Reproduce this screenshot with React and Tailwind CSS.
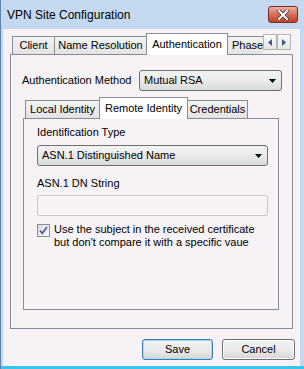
import React from 'react'

const Tab = ({ label, active, className = '' }) =>
  active ? (
    <div className={`relative z-10 -mb-px h-[22px] flex items-center justify-center whitespace-nowrap bg-white border border-b-0 border-[#898c95] ${className}`}>
      {label}
    </div>
  ) : (
    <div className={`h-[18px] flex items-center justify-center whitespace-nowrap bg-gradient-to-b from-[#f3f3f3] to-[#e3e3e3] border border-b-0 border-[#898c95] ${className}`}>
      {label}
    </div>
  )

const Combo = ({ value, className = '' }) => (
  <div className={`h-[21px] flex items-center justify-between pl-[4px] pr-[5px] rounded-[3px] border border-[#707070] bg-gradient-to-b from-[#f2f2f2] via-[#ebebeb] to-[#d9d9d9] ${className}`}>
    <span>{value}</span>
    <svg width="7" height="4" viewBox="0 0 7 4"><path d="M0 0h7L3.5 4z" fill="#000" /></svg>
  </div>
)

const Button = ({ label, primary, className = '' }) => (
  <div
    className={`h-[21px] flex items-center justify-center rounded-[3px] border ${
      primary ? 'border-[#3c7fb1] shadow-[inset_0_0_0_1px_#a4d8f5]' : 'border-[#707070] shadow-[inset_0_0_0_1px_#fbfbfb]'
    } bg-gradient-to-b from-[#f2f2f2] via-[#ebebeb] to-[#d6d6d6] ${className}`}
  >
    {label}
  </div>
)

const Arrow = ({ dir }) => (
  <div className="w-[14px] h-[16px] flex items-center justify-center border border-[#b5b5b5] bg-gradient-to-b from-[#fafafa] to-[#e6e6e6]">
    <svg width="4" height="7" viewBox="0 0 4 7">
      {dir === 'left' ? <path d="M4 0v7L0 3.5z" fill="#3b5a85" /> : <path d="M0 0v7l4-3.5z" fill="#3b5a85" />}
    </svg>
  </div>
)

export default function App() {
  return (
    <div className="w-[304px] h-[369px] flex flex-col bg-[#c4d9ef] border-l border-[#5f83ae] text-[11px] leading-none text-black font-['Liberation_Sans',Arial,sans-serif] overflow-hidden">
      {/* title bar */}
      <div className="h-[29px] flex items-start shrink-0">
        <span className="mt-[9px] ml-[6px] text-[12px]">VPN Site Configuration</span>
        <div className="ml-auto mr-[6px] mt-[6px] w-[30px] h-[17px] rounded-[3px] border border-[#7e2c21] bg-gradient-to-b from-[#e8b0a2] via-[#d46e5a] to-[#c2412b] flex items-center justify-center">
          <svg width="12" height="10" viewBox="0 0 12 10">
            <path d="M2 1l8 8M10 1l-8 8" stroke="#3a3a3a" strokeWidth="3.6" strokeLinecap="square" />
            <path d="M2 1l8 8M10 1l-8 8" stroke="#fff" strokeWidth="2" strokeLinecap="square" />
          </svg>
        </div>
      </div>

      {/* client */}
      <div className="flex-1 ml-[2px] mr-[4px] bg-[#f6f2f5] flex flex-col">
        <div className="mt-[4px] ml-[7px] w-[283px]">
          <div className="flex items-end h-[21px] pl-[2px]">
            <Tab label="Client" className="w-[43px]" />
            <Tab label="Name Resolution" className="w-[93px] -ml-px" />
            <Tab label="Authentication" active className="w-[82px] -ml-px" />
            <div className="h-[18px] w-[36px] pl-[4px] flex items-center bg-gradient-to-b from-[#f3f3f3] to-[#e3e3e3] border border-b-0 border-r-0 border-[#898c95] whitespace-nowrap -ml-px">
              Phase
            </div>
            <div className="flex self-start mt-[1px]">
              <Arrow dir="left" />
              <Arrow dir="right" />
            </div>
          </div>

          <div className="h-[275px] border border-[#898c95] bg-[#f6f2f5] pt-[15px] pl-[11px]">
            <div className="flex items-center">
              <span className="w-[117px]">Authentication Method</span>
              <Combo value="Mutual RSA" className="w-[143px]" />
            </div>

            <div className="mt-[7px] ml-[1px] w-[256px]">
              <div className="flex items-end h-[20px] pl-[2px]">
                <Tab label="Local Identity" className="w-[75px]" />
                <Tab label="Remote Identity" active className="w-[89px] -ml-px" />
                <Tab label="Credentials" className="w-[61px] -ml-px" />
              </div>
              <div className="h-[192px] border border-[#898c95] bg-[#f6f2f5] pl-[13px] pt-[8px]">
                <div>Identification Type</div>
                <Combo value="ASN.1 Distinguished Name" className="mt-[7px] w-[231px]" />
                <div className="mt-[12px]">ASN.1 DN String</div>
                <div className="mt-[6px] w-[231px] h-[21px] rounded-[2px] border border-[#c9c9c9] bg-[#f6f2f5]" />
                <div className="mt-[7px] flex items-start gap-[4px]">
                  <div className="mt-[1px] w-[13px] h-[13px] shrink-0 border border-[#8e8f8f] bg-gradient-to-br from-[#dcdcdc] to-[#fbfbfb] flex items-center justify-center">
                    <svg width="9" height="9" viewBox="0 0 9 9">
                      <path d="M1 4.5l2.3 2.8L8 1" fill="none" stroke="#4b61a5" strokeWidth="1.8" />
                    </svg>
                  </div>
                  <div className="leading-[13px]">
                    Use the subject in the received certificate
                    <br />
                    but don't compare it with a specific vaue
                  </div>
                </div>
              </div>
            </div>
          </div>
        </div>

        <div className="mt-[10px] flex justify-end gap-[9px] pr-[5px]">
          <Button label="Save" primary className="w-[71px]" />
          <Button label="Cancel" className="w-[73px]" />
        </div>
      </div>
      <div className="h-[3px] shrink-0 bg-[#36c7ee]" />
    </div>
  )
}
